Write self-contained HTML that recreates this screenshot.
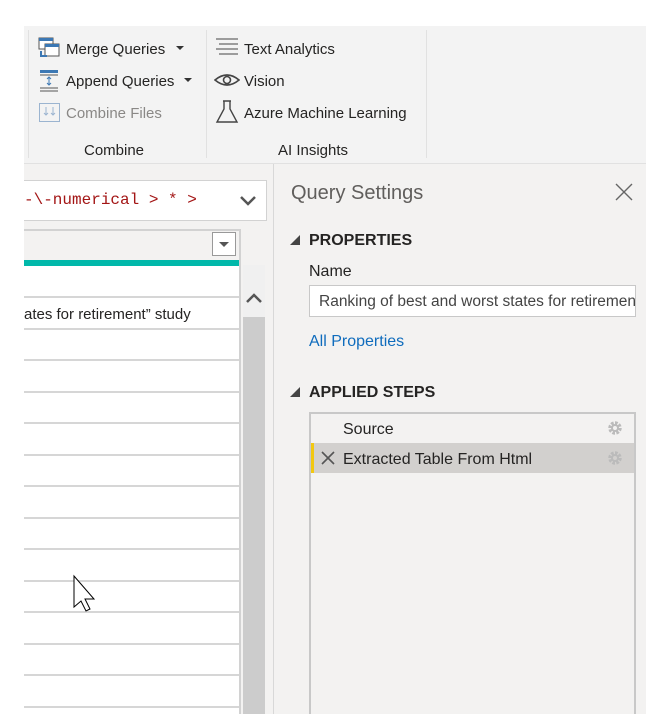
<!DOCTYPE html>
<html><head><style>
*{margin:0;padding:0;box-sizing:border-box}
body{width:646px;height:714px;overflow:hidden;background:#fff;font-family:"Segoe UI","Liberation Sans",sans-serif;color:#252423;position:relative}
.a{position:absolute}
.t{font-size:15px;white-space:nowrap;margin-top:3px}
.m{margin-top:3px}
</style></head><body>
<!-- ribbon -->
<div class="a" style="left:24px;top:26px;width:622px;height:138px;background:#f3f3f3;border-bottom:1px solid #e1e1e1"></div>
<div class="a" style="left:28px;top:30px;width:1px;height:128px;background:#e1e1e1"></div>
<div class="a" style="left:206px;top:30px;width:1px;height:128px;background:#e1e1e1"></div>
<div class="a" style="left:426px;top:30px;width:1px;height:128px;background:#e1e1e1"></div>
<!-- icons -->
<svg class="a" style="left:38px;top:37px" width="24" height="24"><rect x="1" y="1" width="14" height="11" fill="#fff" stroke="#555"/><rect x="1" y="1" width="14" height="3" fill="#3c78b4"/><rect x="7" y="7" width="14" height="12" fill="#fff" stroke="#555"/><rect x="7" y="7" width="14" height="3" fill="#3c78b4"/><path d="M3 14 v5 h6" stroke="#3c78b4" stroke-width="2" fill="none"/></svg>
<svg class="a" style="left:38px;top:69px" width="24" height="24"><rect x="2" y="1" width="18" height="3" fill="#3c78b4"/><path d="M2 6h18M2 19h18M2 22h18" stroke="#555"/><path d="M11 8v8M9 10l2-2 2 2M9 14l2 2 2-2" stroke="#3c78b4" fill="none"/></svg>
<svg class="a" style="left:38px;top:101px" width="24" height="24"><rect x="1.5" y="2.5" width="20" height="18" fill="none" stroke="#9bb4d0"/><path d="M8 6v8M6 12l2 2 2-2M15 6v8M13 12l2 2 2-2" stroke="#9bb4d0" fill="none"/></svg>
<div class="a t" style="left:66px;top:38px">Merge Queries</div>
<div class="a" style="left:176px;top:46px;border:4px solid transparent;border-top:4px solid #333"></div>
<div class="a t" style="left:66px;top:70px">Append Queries</div>
<div class="a" style="left:184px;top:78px;border:4px solid transparent;border-top:4px solid #333"></div>
<div class="a t" style="left:66px;top:102px;color:#8a8886">Combine Files</div>
<div class="a t" style="left:84px;top:139px">Combine</div>
<svg class="a" style="left:214px;top:37px" width="26" height="22"><path d="M2 2h22M5 7h19M2 12h22M5 17h19" stroke="#444"/></svg>
<svg class="a" style="left:214px;top:72px" width="26" height="16"><path d="M1 8Q13 -2 25 8Q13 18 1 8Z" fill="none" stroke="#444" stroke-width="1.6"/><circle cx="13" cy="8" r="3.5" fill="none" stroke="#444" stroke-width="1.6"/></svg>
<svg class="a" style="left:215px;top:99px" width="24" height="26"><path d="M8 2h8M9 2v8L2 23h20L15 10V2" fill="none" stroke="#444" stroke-width="1.4"/></svg>
<div class="a t" style="left:244px;top:38px">Text Analytics</div>
<div class="a t" style="left:244px;top:70px">Vision</div>
<div class="a t" style="left:244px;top:102px">Azure Machine Learning</div>
<div class="a t" style="left:278px;top:139px">AI Insights</div>
<!-- left body -->
<div class="a" style="left:24px;top:164px;width:249px;height:550px;background:#f3f2f1"></div>
<div class="a" style="left:24px;top:180px;width:243px;height:41px;background:#fff;border:1px solid #d2d2d2;border-left:none"></div>
<div class="a" style="left:24px;top:191px;font-family:'Liberation Mono',monospace;font-size:16px;color:#a31515;white-space:nowrap">-\-numerical &gt; * &gt;</div>
<svg class="a" style="left:238px;top:194px" width="20" height="14"><path d="M3 3l7 7 7-7" stroke="#555" stroke-width="2.5" fill="none"/></svg>
<div class="a" style="left:24px;top:229px;width:217px;height:485px;background:#fff;border-right:2px solid #d2d2d2"></div>
<div class="a" style="left:24px;top:229px;width:215px;height:33px;background:#f3f2f1;border-top:2px solid #d2d2d2"></div>
<div class="a" style="left:212px;top:232px;width:24px;height:24px;background:#fff;border:1px solid #999"></div>
<div class="a" style="left:219px;top:242px;border:5px solid transparent;border-top:5px solid #555"></div>
<div class="a" style="left:24px;top:260px;width:215px;height:6px;background:#01b8aa"></div>
<div class="a t" style="left:24px;top:303px">ates for retirement” study</div>
<div id="rows"></div>
<div class="a" style="left:243px;top:265px;width:22px;height:449px;background:#f0f0f0"></div>
<div class="a" style="left:243px;top:317px;width:22px;height:397px;background:#cccccc"></div>
<svg class="a" style="left:245px;top:291px" width="18" height="14"><path d="M2 11l7-7 7 7" stroke="#555" stroke-width="2.5" fill="none"/></svg>
<svg class="a" style="left:72px;top:574px" width="30" height="42"><path d="M2 2v31l7-6 5 10 4-2-5-10h9z" fill="#fff" stroke="#000" stroke-width="1"/></svg>
<!-- right pane -->
<div class="a" style="left:273px;top:164px;width:1px;height:550px;background:#d8d8d8"></div>
<div class="a" style="left:274px;top:164px;width:372px;height:550px;background:#f3f2f1"></div>
<div class="a m" style="left:291px;top:179px;font-size:20px;color:#605e5c;font-weight:300">Query Settings</div>
<svg class="a" style="left:614px;top:182px" width="20" height="20"><path d="M2 2l16 16M18 2L2 18" stroke="#666" stroke-width="1.4"/></svg>
<div class="a" style="left:290px;top:235px;border:5px solid transparent;border-right:5px solid #444;border-bottom:5px solid #444"></div>
<div class="a m" style="left:309px;top:229px;font-size:16px;font-weight:bold">PROPERTIES</div>
<div class="a t" style="left:309px;top:260px;font-size:16px">Name</div>
<div class="a" style="left:309px;top:285px;width:327px;height:32px;background:#fff;border:1px solid #c8c8c8;overflow:hidden;padding:7px 9px 0;font-size:15.5px;color:#444;white-space:nowrap">Ranking of best and worst states for retirement</div>
<div class="a t" style="left:309px;top:330px;font-size:16px;color:#0f6cbd">All Properties</div>
<div class="a" style="left:290px;top:387px;border:5px solid transparent;border-right:5px solid #444;border-bottom:5px solid #444"></div>
<div class="a m" style="left:309px;top:381px;font-size:16px;font-weight:bold">APPLIED STEPS</div>
<div class="a" style="left:309px;top:412px;width:327px;height:302px;border:2px solid #c8c8c8;border-bottom:none"></div>
<div class="a t" style="left:343px;top:418px;font-size:16px">Source</div>
<div class="a" style="left:311px;top:443px;width:323px;height:30px;background:#d2d0ce;border-left:3px solid #f2c811"></div>
<svg class="a" style="left:321px;top:451px" width="14" height="14"><path d="M1 1l12 12M13 1L1 13" stroke="#555" stroke-width="1.6"/></svg>
<div class="a t" style="left:343px;top:448px;font-size:16px">Extracted Table From Html</div>
<svg class="a" style="left:606px;top:419px" width="18" height="18"><circle cx="9" cy="9" r="5" fill="none" stroke="#bbb" stroke-width="3.5" stroke-dasharray="2.6 1.3"/><circle cx="9" cy="9" r="3" fill="none" stroke="#bbb" stroke-width="2"/></svg>
<svg class="a" style="left:606px;top:449px" width="18" height="18"><circle cx="9" cy="9" r="5" fill="none" stroke="#bbb" stroke-width="3.5" stroke-dasharray="2.6 1.3"/><circle cx="9" cy="9" r="3" fill="none" stroke="#bbb" stroke-width="2"/></svg>
<script>
var h='';for(var i=0;i<14;i++){var y=Math.round(296+i*31.5);h+='<div class="a" style="left:24px;top:'+y+'px;width:215px;height:2px;background:#d6d6d6"></div>';}
document.getElementById('rows').outerHTML=h;
</script>
</body></html>
